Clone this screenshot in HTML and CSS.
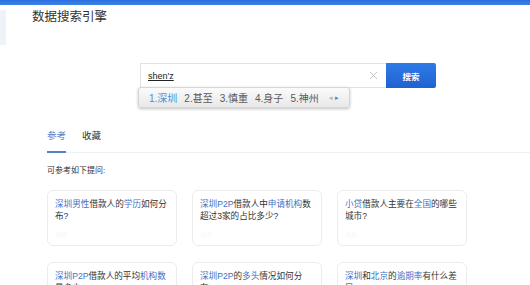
FILE: index.html
```
<!DOCTYPE html>
<html lang="zh-CN">
  <head>
    <meta charset="UTF-8">
    <title>数据搜索引擎</title>
    <link rel="stylesheet" href="styles.css">
  </head>
  <body>
    <div class="topbar"></div>

    <div class="header">
      <div class="side"></div>
      <div class="title">数据搜索引擎</div>
    </div>

    <div class="search">
      <div class="input">
        <span class="query">shen'z</span>
        <svg class="clear" width="9" height="9" viewBox="0 0 9 9">
          <path d="M1 1L8 8M8 1L1 8" stroke="#c4c4c4" stroke-width="1" fill="none"/>
        </svg>
      </div>
      <button class="submit">搜索</button>

      <div class="ime">
        <span class="cand active">1.深圳</span>
        <span class="cand">2.甚至</span>
        <span class="cand">3.慎重</span>
        <span class="cand">4.身子</span>
        <span class="cand">5.神州</span>
        <span class="arrows"><i class="prev">◂</i><i class="next">▸</i></span>
      </div>
    </div>

    <div class="tabs">
      <div class="tab active">参考</div>
      <div class="tab">收藏</div>
    </div>

    <div class="hint">可参考如下提问:</div>

    <div class="cards">
      <div class="card">
        <p><em>深圳</em><em>男性</em>借款人的<em>学历</em>如何分布?</p>
        <div class="foot">浏览</div>
      </div>
      <div class="card">
        <p><em>深圳P2P</em>借款人中<em>申请机构</em>数超过3家的占比多少?</p>
        <div class="foot">浏览</div>
      </div>
      <div class="card">
        <p><em>小贷</em>借款人主要在<em>全国</em>的哪些城市?</p>
        <div class="foot">浏览</div>
      </div>
      <div class="card">
        <p><em>深圳P2P</em>借款人的平均<em>机构数</em>是多少?</p>
        <div class="foot">浏览</div>
      </div>
      <div class="card">
        <p><em>深圳P2P</em>的<em>多头</em>情况如何分布?</p>
        <div class="foot">浏览</div>
      </div>
      <div class="card">
        <p><em>深圳</em>和<em>北京</em>的<em>逾期率</em>有什么差异?</p>
        <div class="foot">浏览</div>
      </div>
    </div>
  </body>
</html>
```

FILE: styles.css
```
* {
  margin: 0;
  padding: 0;
  box-sizing: border-box;
}

html,
body {
  overflow: hidden;
}

body {
  background: #ffffff;
  color: #333333;
  font-family: "Liberation Sans", "Noto Sans CJK SC", sans-serif;
}

.topbar {
  height: 5px;
  background: linear-gradient(#2c6fdd, #3b82ea);
}

.header {
  display: flex;
  align-items: flex-start;
}

.header > .side {
  width: 6px;
  height: 35px;
  margin-top: 5px;
  background: #eef3fa;
}

.header > .title {
  margin-left: 26px;
  margin-top: 4px;
  font-size: 12.5px;
  line-height: 16px;
  color: #333333;
}

.search {
  position: relative;
  display: flex;
  margin-top: 18px;
  margin-left: 140px;
  width: 296px;
}

.search > .input {
  width: 246px;
  height: 25px;
  border: 1px solid #e2e2e2;
  border-right: none;
  display: flex;
  align-items: center;
  justify-content: space-between;
  padding: 0 8px 0 7px;
}

.search .query {
  font-size: 9px;
  color: #222222;
  text-decoration: underline;
}

.search > .submit {
  width: 50px;
  height: 25px;
  border: none;
  border-radius: 0 2px 2px 0;
  background: linear-gradient(#2f7ae6, #1f62d1);
  color: #ffffff;
  font-family: "Noto Sans CJK SC", sans-serif;
  font-size: 8.5px;
  font-weight: bold;
}

.ime {
  position: absolute;
  left: -2px;
  top: 24px;
  width: 212px;
  height: 21px;
  display: flex;
  align-items: center;
  gap: 7px;
  padding-left: 10px;
  border: 1px solid #d6d6d6;
  border-radius: 3px;
  background: linear-gradient(#fbfbfb, #e8e8e8);
  box-shadow: 0 1px 3px rgba(0, 0, 0, 0.25);
  font-size: 10px;
  color: #5a5a5a;
}

.ime > .active {
  color: #4a8fd8;
}

.ime > .arrows {
  display: flex;
  gap: 2px;
  margin-left: 3px;
  font-size: 7px;
}

.ime > .arrows i {
  font-style: normal;
}

.ime .prev {
  color: #b0b0b0;
}

.ime .next {
  color: #3d86dd;
}

.tabs {
  display: flex;
  gap: 16px;
  margin-top: 40px;
  margin-left: 47px;
  border-bottom: 1px solid #edf0f4;
}

.tabs > .tab {
  font-size: 9.5px;
  line-height: 14px;
  padding: 1px 0 8px;
  color: #333333;
}

.tabs > .tab.active {
  color: #5a80c9;
  border-bottom: 2px solid #5b7fc4;
  margin-bottom: -1px;
}

.hint {
  margin-top: 12px;
  margin-left: 47px;
  font-size: 8px;
  line-height: 12px;
  color: #333333;
}

.cards {
  display: grid;
  grid-template-columns: repeat(3, 130px);
  column-gap: 15px;
  row-gap: 16px;
  margin-top: 13px;
  margin-left: 47px;
}

.card {
  height: 56px;
  border: 1px solid #ececec;
  border-radius: 6px;
  padding: 7px 6px 0 7px;
}

.card > p {
  height: 32px;
  font-size: 8.6px;
  line-height: 12px;
  color: #333333;
}

.card em {
  font-style: normal;
  color: #3f6fc6;
}

.card > .foot {
  font-size: 6px;
  color: #f7f7f7;
}
```
